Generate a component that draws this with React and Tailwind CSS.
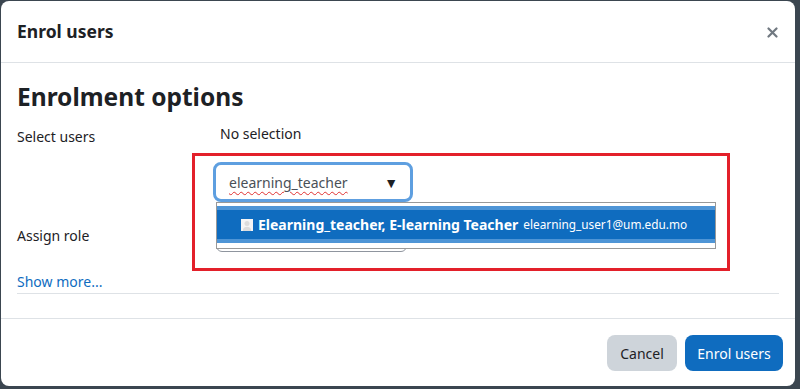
import React from 'react';

const font = { fontFamily: '"Noto Sans", "Open Sans", sans-serif' };

const UserIcon = () => (
  <svg width="12" height="12" viewBox="0 0 12 12" className="shrink-0">
    <rect width="12" height="12" fill="#f5f5f5" />
    <circle cx="6" cy="4.6" r="2.5" fill="#dcdcdc" />
    <path d="M1.8 12C1.8 9.2 3.7 7.8 6 7.8S10.2 9.2 10.2 12Z" fill="#dcdcdc" />
  </svg>
);

const CloseIcon = () => (
  <svg width="11" height="11" viewBox="0 0 11 11">
    <path d="M1.5 1.5L9.5 9.5M9.5 1.5L1.5 9.5" stroke="#707880" strokeWidth="2.2" strokeLinecap="round" />
  </svg>
);

export default function App() {
  return (
    <div className="h-[389px] w-[800px] bg-[#3b4650] pl-[1px] pt-[1px]" style={font}>
      <div className="flex h-[385px] w-[794px] flex-col rounded-lg bg-white text-[#1d2125]">
        {/* header */}
        <div className="flex h-[62px] shrink-0 items-center justify-between border-b border-[#dee2e6] pl-4 pr-[16px]">
          <h5 className="text-[17.5px] font-bold">Enrol users</h5>
          <span className="mr-[1px] mt-[2px]">
            <CloseIcon />
          </span>
        </div>

        {/* body */}
        <div className="relative flex-1 px-4">
          <h3 className="mt-[17px] text-[24.5px] font-bold leading-[34px]">Enrolment options</h3>

          <div className="mt-[9px] flex">
            <div className="w-[203px] shrink-0 pt-[3px] text-[14px] leading-[22px]">Select users</div>
            <div className="flex flex-col">
              <div className="text-[14px] leading-[22px]">No selection</div>
              <div className="mt-[17px] ml-[-7px] flex h-[40px] w-[200px] shrink-0 items-center justify-between rounded-lg border-[3px] border-[#5e9fe0] bg-white pl-[13px] pr-[12px]">
                <span className="text-[14px] text-[#495057] underline decoration-wavy decoration-[#e03030] decoration-1 underline-offset-[3px]">
                  elearning_teacher
                </span>
                <span className="text-[14px] text-[#1d2125]">▼</span>
              </div>
            </div>
          </div>

          <div className="mt-[12px] flex">
            <div className="w-[203px] shrink-0 pt-[11px] text-[14px] leading-[22px]">Assign role</div>
            <div className="ml-[-4px] h-[38px] w-[191px] shrink-0 rounded-md border border-[#8f959e] bg-white" />
          </div>

          <div className="mt-[20px] text-[14px] leading-[20px] text-[#0f6cbf]">Show more...</div>
          <div className="mt-[1px] border-b border-[#dee2e6]" />

          {/* dropdown list overlay */}
          <div className="absolute left-[215px] top-[139px] h-[47px] w-[500px] border border-[#999] bg-white pt-[3px]">
            <div className="flex h-[37px] items-center gap-[5px] border-y-[4px] border-[#4f95d6] bg-[#0f6cbf] pl-[24px] text-white">
              <UserIcon />
              <span className="whitespace-nowrap text-[14px] font-bold">Elearning_teacher, E-learning Teacher</span>
              <span className="whitespace-nowrap text-[11.8px]">elearning_user1@um.edu.mo</span>
            </div>
          </div>

          {/* red annotation */}
          <div className="pointer-events-none absolute left-[191px] top-[90px] h-[118px] w-[538px] border-[3px] border-[#e3202a]" />
        </div>

        {/* footer */}
        <div className="flex h-[68px] shrink-0 items-center justify-end gap-[8px] border-t border-[#dee2e6] pr-[12px] pt-[1px]">
          <button className="h-[36px] w-[70px] rounded-lg bg-[#ced4da] text-[14px] text-[#1d2125]">Cancel</button>
          <button className="h-[36px] w-[98px] rounded-lg bg-[#0f6cbf] text-[14px] text-white">Enrol users</button>
        </div>
      </div>
    </div>
  );
}
